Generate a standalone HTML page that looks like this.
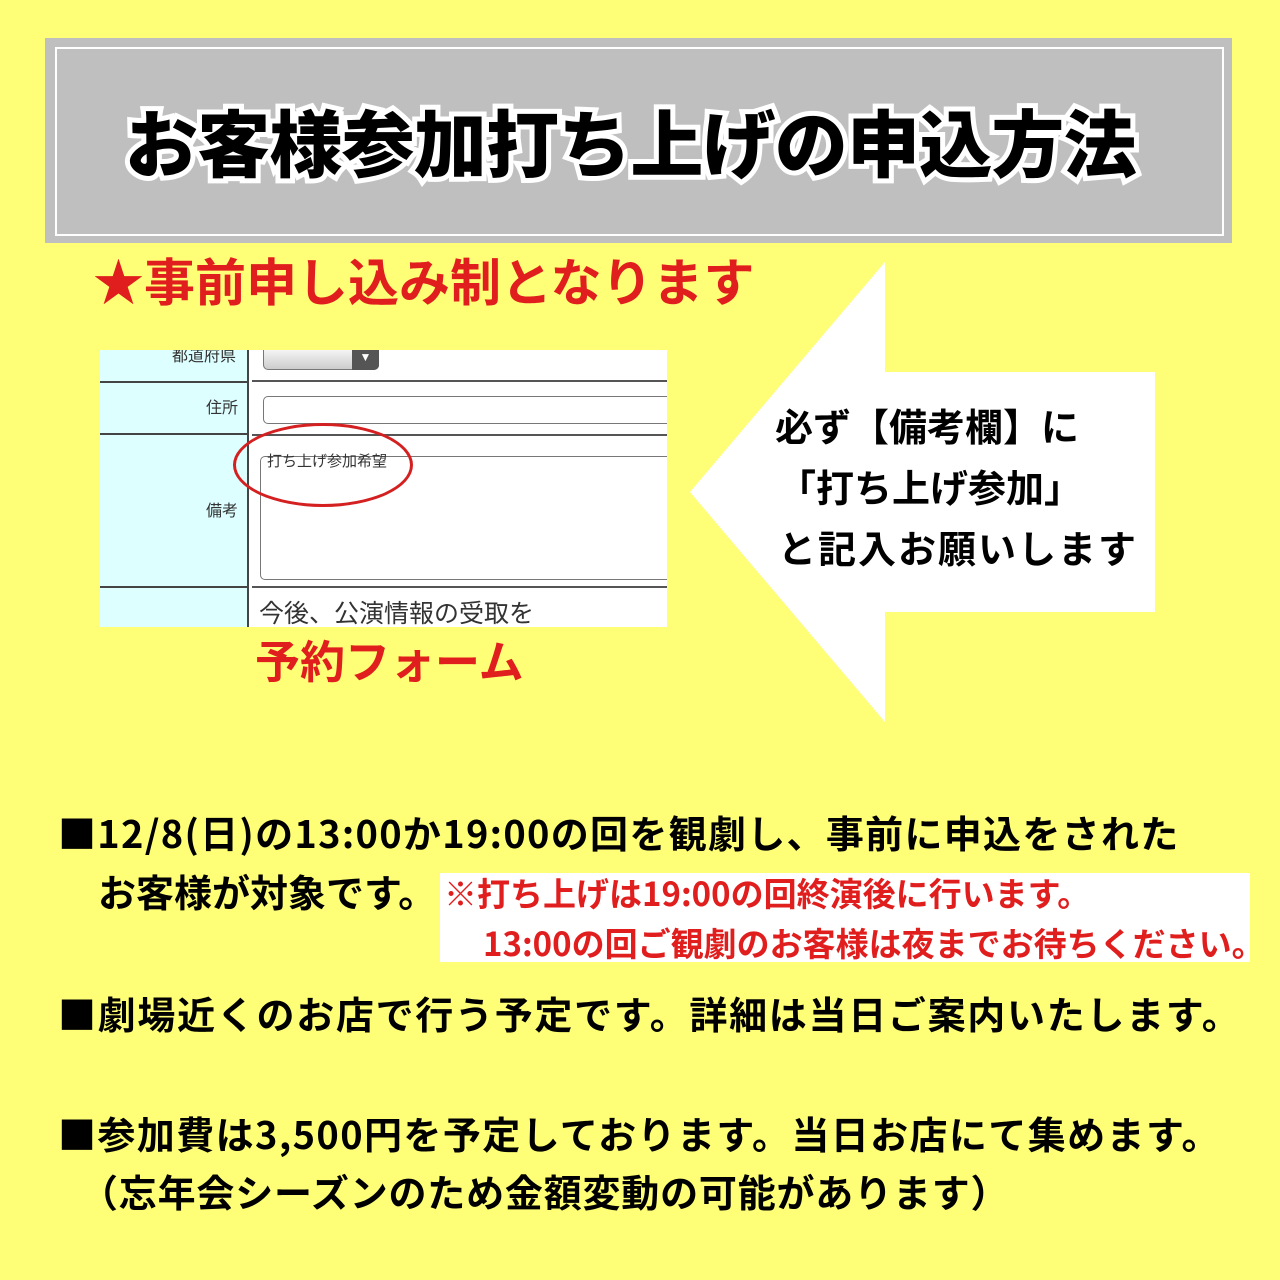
<!DOCTYPE html>
<html><head><meta charset="utf-8"><style>
body{margin:0;width:1280px;height:1280px;background:#FFFF77;position:relative;overflow:hidden;font-family:"Liberation Sans","Noto Sans CJK JP",sans-serif;}
.a{position:absolute;white-space:nowrap;line-height:1;}
.b{font-weight:bold;}
</style></head><body>
<div class="a" style="left:45px;top:38px;width:1187px;height:205px;background:#BFBFBF;"></div>
<div class="a" style="left:55px;top:47px;width:1165px;height:185px;border:2px solid #fff;"></div>
<div class="a b" style="left:125px;top:104px;font-size:73px;color:#000;font-weight:900;-webkit-text-stroke:10px #fff;paint-order:stroke fill;letter-spacing:-0.8px;font-family:'Noto Sans CJK JP',sans-serif;">お客様参加打ち上げの申込方法</div>
<div class="a b" style="left:93px;top:254px;font-size:51px;color:#E01E1E;font-family:'Noto Sans CJK JP',sans-serif;">★事前申し込み制となります</div>

<div class="a" style="left:100px;top:350px;width:567px;height:277px;background:#fff;overflow:hidden;">
  <div class="a" style="left:0;top:0;width:147px;height:277px;background:#DDFFFF;"></div>
  <div class="a" style="left:147px;top:0;width:2px;height:277px;background:#444;"></div>
  <div class="a" style="left:0;top:31px;width:147px;height:2px;background:#444;"></div>
  <div class="a" style="left:0;top:83px;width:147px;height:2px;background:#444;"></div>
  <div class="a" style="left:0;top:236px;width:147px;height:2px;background:#444;"></div>
  <div class="a" style="left:152px;top:30px;width:415px;height:2px;background:#555;"></div>
  <div class="a" style="left:152px;top:84px;width:415px;height:2px;background:#555;"></div>
  <div class="a" style="left:152px;top:236px;width:415px;height:2px;background:#555;"></div>
  <div class="a" style="left:72px;top:-1px;font-size:16px;color:#333;">都道府県</div>
  <div class="a" style="left:106px;top:51px;font-size:16px;color:#333;">住所</div>
  <div class="a" style="left:106px;top:154px;font-size:16px;color:#333;">備考</div>
  <div class="a" style="left:163px;top:-6px;width:114px;height:24px;border:1px solid #777;border-radius:5px;background:linear-gradient(#fff,#ccc);"></div>
  <div class="a" style="left:252px;top:-6px;width:27px;height:26px;background:#555;border-radius:0 5px 5px 0;color:#fff;font-size:12px;text-align:center;line-height:26px;">▼</div>
  <div class="a" style="left:163px;top:46px;width:410px;height:26px;border:1px solid #777;border-radius:5px;"></div>
  <div class="a" style="left:160px;top:106px;width:410px;height:122px;border:1px solid #777;border-radius:5px;"></div>
  <div class="a" style="left:167px;top:104px;font-size:15px;color:#333;">打ち上げ参加希望</div>
  <div class="a" style="left:133px;top:73px;width:174px;height:78px;border:3px solid #D42020;border-radius:50%;"></div>
  <div class="a" style="left:159px;top:252px;font-size:25px;color:#333;">今後、公演情報の受取を</div>
</div>
<div class="a b" style="left:255px;top:636px;font-size:45px;color:#E01E1E;font-family:'Noto Sans CJK JP',sans-serif;">予約フォーム</div>

<svg class="a" style="left:0;top:0" width="1280" height="1280"><polygon points="690,492 885,262 885,372 1155,372 1155,612 885,612 885,722" fill="#fff"/></svg>
<div class="a b" style="left:775px;top:406px;font-size:38px;color:#000;font-family:'Noto Sans CJK JP',sans-serif;">必ず【備考欄】に</div>
<div class="a b" style="left:778px;top:467px;font-size:38px;color:#000;font-family:'Noto Sans CJK JP',sans-serif;">「打ち上げ参加」</div>
<div class="a b" style="left:778px;top:528px;font-size:38px;color:#000;letter-spacing:2px;font-family:'Noto Sans CJK JP',sans-serif;">と記入お願いします</div>

<div class="a b" style="left:58px;top:813px;font-size:38px;color:#000;font-family:'Noto Sans CJK JP',sans-serif;letter-spacing:1.3px;">■12/8(日)の13:00か19:00の回を観劇し、事前に申込をされた</div>
<div class="a b" style="left:98px;top:872px;font-size:38px;color:#000;font-family:'Noto Sans CJK JP',sans-serif;">お客様が対象です。</div>
<div class="a" style="left:440px;top:873px;width:810px;height:89px;background:#fff;"></div>
<div class="a b" style="left:444px;top:876px;font-size:33px;color:#E01E1E;font-family:'Noto Sans CJK JP',sans-serif;">※打ち上げは19:00の回終演後に行います。</div>
<div class="a b" style="left:483px;top:926px;font-size:33px;color:#E01E1E;font-family:'Noto Sans CJK JP',sans-serif;">13:00の回ご観劇のお客様は夜までお待ちください。</div>
<div class="a b" style="left:58px;top:994px;font-size:38px;color:#000;letter-spacing:1.7px;font-family:'Noto Sans CJK JP',sans-serif;">■劇場近くのお店で行う予定です。詳細は当日ご案内いたします。</div>
<div class="a b" style="left:58px;top:1114px;font-size:38px;color:#000;letter-spacing:1.4px;font-family:'Noto Sans CJK JP',sans-serif;">■参加費は3,500円を予定しております。当日お店にて集めます。</div>
<div class="a b" style="left:80px;top:1172px;font-size:38px;color:#000;letter-spacing:0.8px;font-family:'Noto Sans CJK JP',sans-serif;">（忘年会シーズンのため金額変動の可能があります）</div>
</body></html>
